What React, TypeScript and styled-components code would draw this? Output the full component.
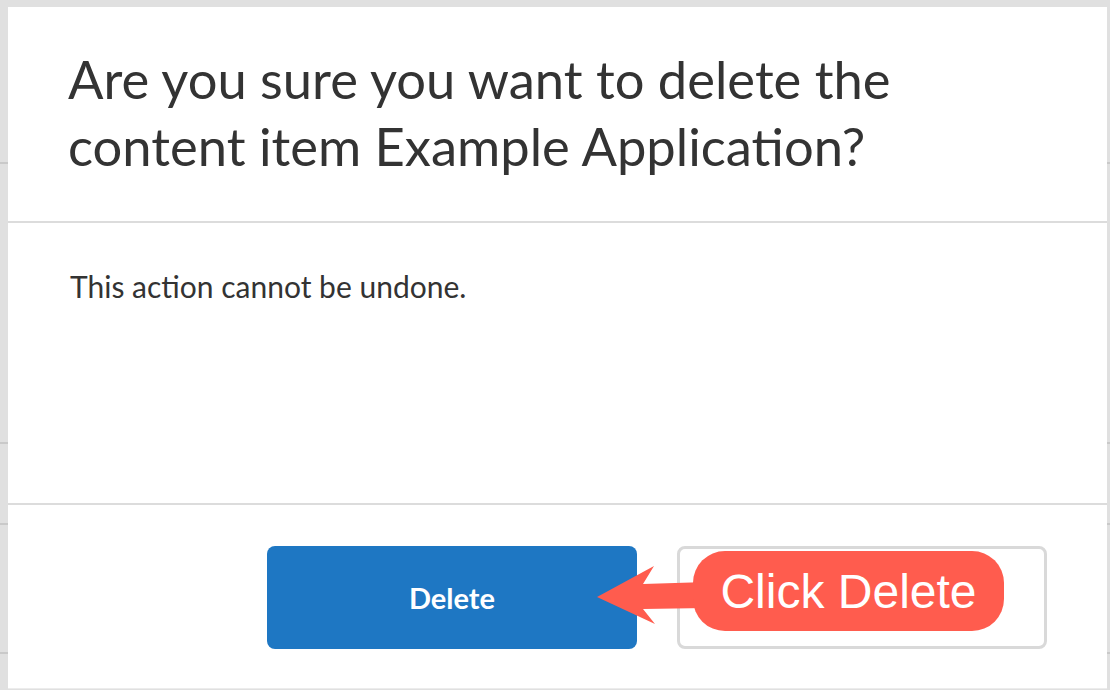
import styled, { createGlobalStyle } from 'styled-components';

const GlobalStyle = createGlobalStyle`
  html, body {
    margin: 0;
    padding: 0;
    background: #e0e0e0;
    font-family: Lato, 'Open Sans', sans-serif;
    color: #333333;
  }
  * {
    box-sizing: border-box;
  }
`;

// page behind the modal, only its row lines peek out at the edges
const Backdrop = styled.div`
  height: 690px;
  display: flex;
  flex-direction: column;
  overflow: hidden;
`;

const BackRow = styled.div<{ $h: number }>`
  height: ${(p) => p.$h}px;
  flex-shrink: 0;
  border-bottom: 2px solid #c9c9c9;
`;

const Modal = styled.div`
  position: fixed;
  top: 7px;
  left: 8px;
  width: 1099px;
  height: 682px;
  background: #ffffff;
  border-bottom: 1px solid #ececec;
  display: flex;
  flex-direction: column;
`;

const Header = styled.header`
  height: 216px;
  padding: 38px 60px 0;
  border-bottom: 2px solid #dcdcdc;
`;

const Title = styled.h1`
  margin: 0;
  font-size: 52.5px;
  line-height: 67px;
  font-weight: 400;
  color: #333333;
`;

const Body = styled.section`
  flex: 1;
  padding: 45px 62px 0;
`;

const Text = styled.p`
  margin: 0;
  font-size: 30px;
  line-height: 36px;
  color: #333333;
`;

const Footer = styled.footer`
  position: relative;
  display: flex;
  justify-content: flex-end;
  gap: 40px;
  padding: 41px 60px 39px;
  border-top: 2px solid #dcdcdc;
`;

const Button = styled.button<{ $primary?: boolean }>`
  width: 370px;
  height: 103px;
  border-radius: 8px;
  font-family: Lato, 'Open Sans', sans-serif;
  font-size: 29px;
  font-weight: 700;
  cursor: pointer;
  background: ${(p) => (p.$primary ? '#1e77c3' : '#ffffff')};
  color: ${(p) => (p.$primary ? '#ffffff' : '#333333')};
  border: ${(p) => (p.$primary ? 'none' : '3px solid #d9d9d9')};
`;

// tutorial annotation drawn over the footer
const Callout = styled.div`
  position: absolute;
  top: 46px;
  left: 589px;
  display: flex;
  align-items: center;
`;

const Arrow = styled.svg`
  position: absolute;
  left: 0;
  top: 9px;
`;

const Pill = styled.div`
  margin-left: 96px;
  width: 311px;
  height: 80px;
  border-radius: 32px;
  background: #ff5c4e;
  color: #ffffff;
  font-family: 'Liberation Sans', Arial, sans-serif;
  font-size: 48px;
  display: flex;
  align-items: center;
  justify-content: center;
  position: relative;
`;

export default function App() {
  return (
    <>
      <GlobalStyle />
      <Backdrop>
        <BackRow $h={164} />
        <BackRow $h={280} />
        <BackRow $h={81} />
        <BackRow $h={129} />
      </Backdrop>
      <Modal>
        <Header>
          <Title>
            Are you sure you want to delete the content item Example
            Application?
          </Title>
        </Header>
        <Body>
          <Text>This action cannot be undone.</Text>
        </Body>
        <Footer>
          <Button $primary>Delete</Button>
          {/* label sits under the callout in the screenshot */}
          <Button aria-label="Cancel" />
          <Callout>
            <Arrow width="110" height="70" viewBox="0 0 110 70">
              <polygon
                points="0,37 57,6 46,24 110,22 110,48 46,49 58,64"
                fill="#ff5c4e"
              />
            </Arrow>
            <Pill>Click Delete</Pill>
          </Callout>
        </Footer>
      </Modal>
    </>
  );
}
